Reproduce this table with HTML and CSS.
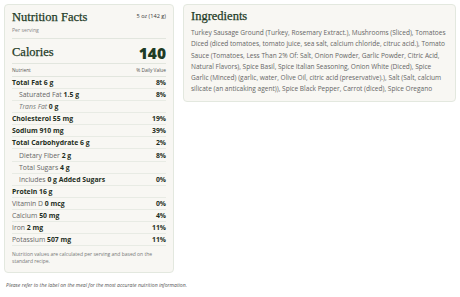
FILE: index.html
```html
<!DOCTYPE html>
<html>
<head>
<meta charset="utf-8">
<link rel="stylesheet" href="styles.css">
</head>
<body>
<div class="wrap">
  <div class="card nf">
    <div class="nf-head">
      <div class="nf-title">Nutrition Facts</div>
      <div class="nf-size">5 oz (142 g)</div>
    </div>
    <div class="nf-per">Per serving</div>
    <div class="nf-cal">
      <div class="cal-label">Calories</div>
      <div class="cal-val">140</div>
    </div>
    <div class="nf-cols">
      <span>Nutrient</span><span>% Daily Value</span>
    </div>
    <div class="row"><span><b>Total Fat 6 g</b></span><b>8%</b></div>
    <div class="row sub"><span>Saturated Fat <b>1.5 g</b></span><b>8%</b></div>
    <div class="row sub"><span><i>Trans Fat</i> <b>0 g</b></span><b></b></div>
    <div class="row"><span><b>Cholesterol 55 mg</b></span><b>19%</b></div>
    <div class="row"><span><b>Sodium 910 mg</b></span><b>39%</b></div>
    <div class="row"><span><b>Total Carbohydrate 6 g</b></span><b>2%</b></div>
    <div class="row sub"><span>Dietary Fiber <b>2 g</b></span><b>8%</b></div>
    <div class="row sub"><span>Total Sugars <b>4 g</b></span><b></b></div>
    <div class="row sub"><span>Includes <b>0 g Added Sugars</b></span><b>0%</b></div>
    <div class="row"><span><b>Protein 16 g</b></span><b></b></div>
    <div class="row"><span>Vitamin D <b>0 mcg</b></span><b>0%</b></div>
    <div class="row"><span>Calcium <b>50 mg</b></span><b>4%</b></div>
    <div class="row"><span>Iron <b>2 mg</b></span><b>11%</b></div>
    <div class="row"><span>Potassium <b>507 mg</b></span><b>11%</b></div>
    <div class="nf-note">Nutrition values are calculated per serving and based on the standard recipe.</div>
  </div>
  <div class="card ing">
    <div class="ing-title">Ingredients</div>
    <div class="ing-text">Turkey Sausage Ground (Turkey, Rosemary Extract.), Mushrooms (Sliced), Tomatoes Diced (diced tomatoes, tomato juice, sea salt, calcium chloride, citruc acid.), Tomato Sauce (Tomatoes, Less Than 2% Of: Salt, Onion Powder, Garlic Powder, Citric Acid, Natural Flavors), Spice Basil, Spice Italian Seasoning, Onion White (Diced), Spice Garlic (Minced) (garlic, water, Olive Oil, citric acid (preservative).), Salt (Salt, calcium silicate (an anticaking agent)), Spice Black Pepper, Carrot (diced), Spice Oregano</div>
  </div>
</div>
<div class="foot">Please refer to the label on the meal for the most accurate nutrition information.</div>
</body>
</html>
```

FILE: styles.css
```css
html, body {
  margin: 0;
  padding: 0;
  background: #ffffff;
}
body {
  font-family: "Open Sans", Lato, sans-serif;
  color: #2b2b2b;
  padding: 4px;
  width: 460px;
  box-sizing: border-box;
}
.wrap {
  display: flex;
  align-items: flex-start;
  gap: 9px;
}
.card {
  background: #f8f7f3;
  border: 1px solid #e3e8df;
  border-radius: 4px;
  box-sizing: border-box;
}
.nf {
  width: 170px;
  padding: 5px 7px 6px 7px;
}
.nf-head {
  display: flex;
  justify-content: space-between;
  align-items: flex-start;
}
.nf-title {
  font-family: "Liberation Serif", serif;
  font-size: 12.5px;
  line-height: 15px;
  color: #1e3b26;
  -webkit-text-stroke: 0.25px #1e3b26;
}
.nf-size {
  font-size: 5.6px;
  line-height: 8px;
  margin-top: 2px;
  color: #3a3a3a;
}
.nf-per {
  font-size: 5.2px;
  line-height: 8px;
  color: #888;
  margin-top: 1px;
  padding-bottom: 4px;
  border-bottom: 1px solid #e2e6de;
}
.nf-cal {
  display: flex;
  justify-content: space-between;
  align-items: center;
  height: 25px;
  padding-top: 3px;
  box-sizing: border-box;
  border-bottom: 1px solid #e2e6de;
}
.cal-label {
  font-family: "Liberation Serif", serif;
  font-size: 12.5px;
  color: #1e3b26;
  -webkit-text-stroke: 0.25px #1e3b26;
}
.cal-val {
  font-size: 15.5px;
  font-weight: 800;
  color: #1e3b26;
}
.nf-cols {
  display: flex;
  justify-content: space-between;
  font-size: 4.8px;
  color: #555;
  height: 12px;
  line-height: 12px;
  border-bottom: 1px solid #e2e6de;
}
.row {
  display: flex;
  justify-content: space-between;
  align-items: center;
  height: 12.08px;
  box-sizing: border-box;
  font-size: 6.85px;
  color: #666;
  border-bottom: 1px solid #e8ebe4;
}
.row b {
  font-weight: 700;
  color: #1e2e22;
}
.row i {
  color: #777;
}
.row.sub span {
  padding-left: 7px;
}
.nf-note {
  font-size: 5px;
  line-height: 7px;
  color: #777;
  margin-top: 5px;
  padding-bottom: 1px;
}
.ing {
  width: 273px;
  padding: 3px 7px 6px 7px;
}
.ing-title {
  font-family: "Liberation Serif", serif;
  font-size: 12.5px;
  line-height: 16px;
  color: #1e3b26;
  -webkit-text-stroke: 0.25px #1e3b26;
  margin-bottom: 3px;
}
.ing-text {
  font-size: 6.55px;
  line-height: 11.3px;
  color: #666;
}
.foot {
  font-size: 5.1px;
  font-style: italic;
  color: #555;
  margin-top: 9px;
  padding-left: 2px;
}
```
